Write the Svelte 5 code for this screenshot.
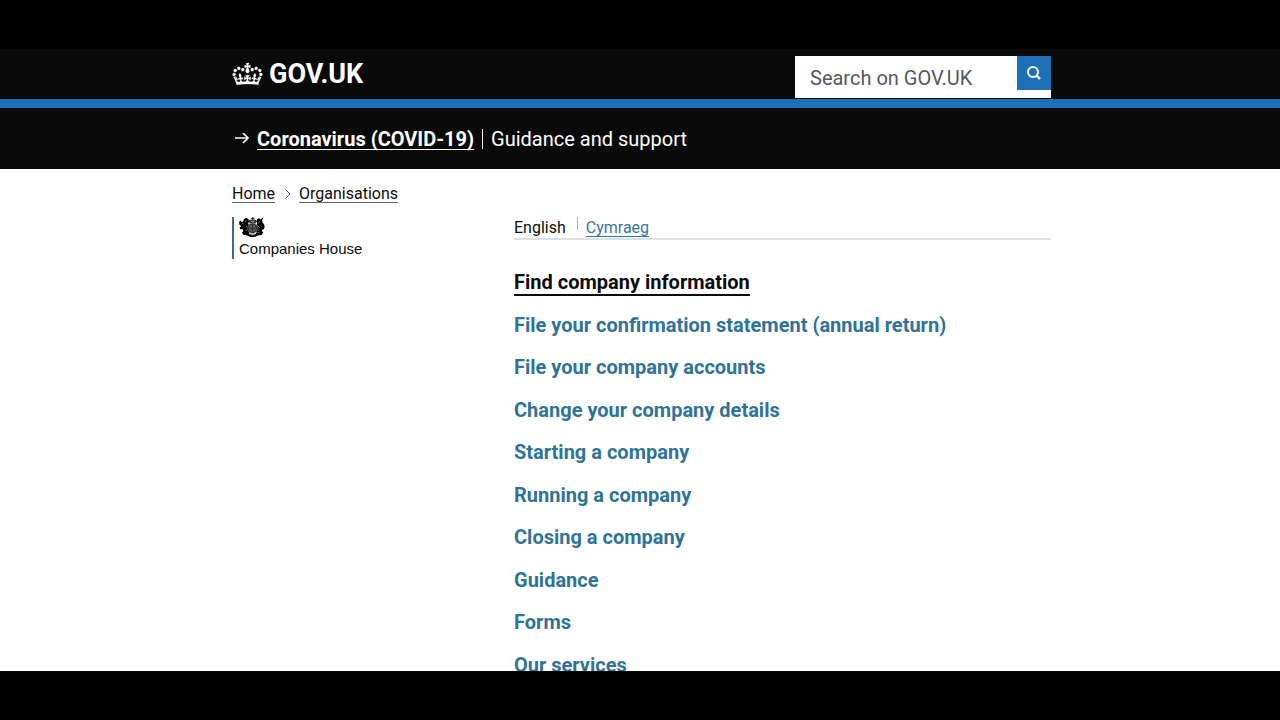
<script>
  const breadcrumbs = ['Home', 'Organisations'];

  const featuredLinks = [
    'Find company information',
    'File your confirmation statement (annual return)',
    'File your company accounts',
    'Change your company details',
    'Starting a company',
    'Running a company',
    'Closing a company',
    'Guidance',
    'Forms',
    'Our services'
  ];

  let focused = $state('Find company information');
  let query = $state('');
</script>

<div class="screen">
  <div class="viewport">
    <header class="header">
      <div class="container header-row">
        <a class="logo" href="#home">
          <svg class="crown" viewBox="0 0 132 97" aria-hidden="true">
            <path fill="currentColor" stroke="currentColor" d="M25 30.2c3.5 1.5 7.7-.2 9.1-3.7 1.5-3.6-.2-7.8-3.9-9.2-3.6-1.4-7.6.3-9.1 3.9-1.4 3.5.3 7.5 3.9 9zM9 39.5c3.6 1.5 7.8-.2 9.2-3.7 1.5-3.6-.2-7.8-3.9-9.1-3.6-1.5-7.6.2-9.1 3.8-1.4 3.5.3 7.5 3.8 9zM4.4 57.2c3.5 1.5 7.7-.2 9.1-3.8 1.5-3.6-.2-7.7-3.9-9.1-3.5-1.5-7.6.3-9.1 3.8-1.4 3.5.3 7.6 3.9 9.1zm38.3-21.4c3.5 1.5 7.7-.2 9.1-3.8 1.5-3.6-.2-7.7-3.9-9.1-3.6-1.5-7.6.3-9.1 3.8-1.3 3.6.4 7.7 3.9 9.1zm64.4-5.6c-3.6 1.5-7.8-.2-9.1-3.7-1.5-3.6.2-7.8 3.8-9.2 3.6-1.4 7.7.3 9.2 3.9 1.3 3.5-.4 7.5-3.9 9zm15.9 9.3c-3.6 1.5-7.7-.2-9.1-3.7-1.5-3.6.2-7.8 3.7-9.1 3.6-1.5 7.7.2 9.2 3.8 1.5 3.5-.3 7.5-3.8 9zm4.7 17.7c-3.6 1.5-7.8-.2-9.2-3.8-1.5-3.6.2-7.7 3.9-9.1 3.6-1.5 7.7.3 9.2 3.8 1.3 3.5-.4 7.6-3.9 9.1zM89.3 35.8c-3.6 1.5-7.8-.2-9.2-3.8-1.4-3.6.2-7.7 3.9-9.1 3.6-1.5 7.7.3 9.2 3.8 1.4 3.6-.3 7.7-3.9 9.1zM69.7 17.7l8.9 4.7V9.3l-8.9 2.8c-.2-.3-.5-.6-.9-.9L72.4 0H59.6l3.5 11.2c-.3.3-.6.5-.9.9l-8.8-2.8v13.1l8.8-4.7c.3.3.6.7.9.9l-5 15.4v.1c-.2.8-.4 1.6-.4 2.4 0 4.1 3.1 7.5 7 8.1h.2c.3 0 .7.1 1 .1.4 0 .7 0 1-.1h.2c4-.6 7.1-4.1 7.1-8.1 0-.8-.1-1.7-.4-2.4V34l-5.1-15.4c.4-.2.7-.6 1-.9zM66 92.8c16.9 0 32.8 1.1 47.1 3.2 4-16.9 8.9-26.7 14-33.5l-9.6-3.4c1 4.9 1.1 7.2 0 10.2-1.5-1.4-3-4.3-4.2-8.7L108.6 76c2.8-2 5-3.2 7.5-3.3-4.4 9.4-10 11.9-13.6 11.2-4.3-.8-6.3-4.6-5.6-7.9 1-4.7 5.7-5.9 8-.5 4.3-8.7-3-11.4-7.6-8.8 7.1-7.2 7.9-13.5 2.1-21.1-8 6.1-8.1 12.3-4.5 20.8-4.7-5.4-12.1-2.5-9.5 6.2 3.4-5.2 7.9-2 7.2 3.1-.6 4.3-6.4 7.8-13.5 7.2-10.3-.9-10.9-8-11.2-13.8 2.5-.5 7.1 1.8 11 7.3L80.2 60c-4.1 4.4-8 5.3-12.3 5.4 1.4-4.4 8-11.6 8-11.6H55.5s6.4 7.2 7.9 11.6c-4.2-.1-8-1-12.3-5.4l1.4 16.4c3.9-5.5 8.5-7.7 10.9-7.3-.3 5.8-.9 12.8-11.1 13.8-7.2.6-12.9-2.9-13.5-7.2-.7-5 3.8-8.3 7.1-3.1 2.7-8.7-4.6-11.6-9.4-6.2 3.7-8.5 3.6-14.7-4.6-20.8-5.8 7.6-5 13.9 2.2 21.1-4.7-2.6-11.9.1-7.7 8.8 2.3-5.5 7.1-4.2 8.1.5.7 3.3-1.3 7.1-5.7 7.9-3.5.7-9-1.8-13.5-11.2 2.5.1 4.7 1.3 7.5 3.3l-4.7-15.4c-1.2 4.4-2.7 7.2-4.3 8.7-1.1-3-.9-5.3 0-10.2l-9.5 3.4c5 6.9 9.9 16.7 14 33.5 14.8-2.1 30.8-3.2 47.7-3.2z" />
          </svg>
          <span>GOV.UK</span>
        </a>
        <form class="search" role="search" onsubmit={(e) => e.preventDefault()}>
          <input type="search" aria-label="Search on GOV.UK" placeholder="Search on GOV.UK" bind:value={query} />
          <button type="submit" aria-label="Search">
            <svg viewBox="0 0 16 16" width="16" height="16" fill="none" stroke="currentColor" stroke-width="2" aria-hidden="true">
              <circle cx="7" cy="7" r="5" />
              <path d="M10.5 10.5 14 14" stroke-width="2.4" />
            </svg>
          </button>
        </form>
      </div>
    </header>

    <aside class="banner" aria-label="Coronavirus">
      <div class="container banner-row">
        <svg class="arrow" viewBox="0 0 14 12" width="14" height="12" fill="none" stroke="currentColor" stroke-width="1.6" aria-hidden="true">
          <path d="M0 5h12.5M8 0l5 5-5 5" />
        </svg>
        <a href="#coronavirus">Coronavirus (COVID-19)</a>
        <span class="banner-text">Guidance and support</span>
      </div>
    </aside>

    <div class="container">
      <nav aria-label="Breadcrumb">
        <ol class="breadcrumbs">
          {#each breadcrumbs as crumb, i}
            <li>
              {#if i > 0}
                <svg class="chevron" viewBox="0 0 6 10" width="6" height="10" fill="none" stroke="currentColor" aria-hidden="true">
                  <path d="M.5 .5 5 5 .5 9.5" />
                </svg>
              {/if}
              <a href="#{crumb.toLowerCase()}">{crumb}</a>
            </li>
          {/each}
        </ol>
      </nav>

      <main class="columns">
        <div>
          <div class="organisation">
            <svg class="crest" viewBox="0 0 54 46" aria-hidden="true">
              <!-- lion -->
              <path d="M7 5l5-3 6 3 1 6-2 4 3 5-2 5 2 8-1 4-5-1-5 2-6-2 3-4-2-5-4 2-3-4 4-4-4-3-1-7 4-3 2 4 4-2z" />
              <path d="M3 14l4 2M13 8l-3 4M15 20l-4 4M15 29l-3 3" fill="none" stroke="#bbb" stroke-width="1.6" />
              <!-- unicorn -->
              <path d="M46 6l6-6-3 9 2 5 3 4 1 6-4 6-3-2 1 5 3 3-5 2-5-3-6 1-1-5 2-6-2-5 3-5-2-4 2-6 4-2z" />
              <path d="M44 10l-4 4M39 20l4 4M39 29l3 3M50 20l-3 3" fill="none" stroke="#bbb" stroke-width="1.6" />
              <!-- crown above the garter -->
              <path d="M26 0h3v3h3v2h-3v2c6-2 9 1 7 5l-2 3H21l-2-3c-2-4 1-7 7-5V5h-3V3h3z" fill="#333" />
              <path d="M23 10h9" stroke="#ccc" stroke-width="1.5" />
              <ellipse cx="27" cy="26" rx="11" ry="12" fill="#222" stroke="#ccc" />
              <ellipse cx="27" cy="26" rx="7" ry="8" fill="#555" stroke="#888" />
              <path d="M27 18v16M20 26h14" stroke="#222" stroke-width="1.5" />
              <!-- motto scroll -->
              <path d="M3 34c6 3 11 0 15 3 5 5 13 5 18 0 4-3 9 0 15-3l-2 6c-5 3-9 1-13 4-5 3-13 3-18 0-4-3-8-1-13-4z" />
              <path d="M19 40c5 3 12 3 17 0" fill="none" stroke="#999" />
            </svg>
            <span>Companies House</span>
          </div>
        </div>

        <div>
          <ul class="languages">
            <li>English</li>
            <li><a href="#cymraeg" lang="cy">Cymraeg</a></li>
          </ul>
          <ul class="featured">
            {#each featuredLinks as link}
              <li>
                <a href="#services" class:focused={focused === link} onfocus={() => (focused = link)}>{link}</a>
              </li>
            {/each}
          </ul>
        </div>
      </main>
    </div>
  </div>
</div>

<style>
  :global(body) {
    margin: 0;
    background: #000;
  }

  .screen {
    box-sizing: border-box;
    height: 100vh;
    padding: 49px 0;
    background: #000;
    color: #0b0c0c;
    font-family: Roboto, 'Liberation Sans', sans-serif;
    font-size: 16px;
    line-height: 20px;
  }

  .viewport {
    height: 100%;
    overflow: hidden;
    background: #fff;
  }

  .container {
    max-width: 819px;
    margin: 0 auto;
    padding: 0 15px 0 18px;
  }

  ul,
  ol {
    list-style: none;
    margin: 0;
    padding: 0;
  }

  .header {
    background: #0a0a0a;
    border-bottom: 9px solid #1d70b8;
  }

  .header-row {
    display: flex;
    justify-content: space-between;
    align-items: flex-start;
    padding-top: 7px;
    padding-bottom: 1px;
  }

  .logo {
    display: flex;
    align-items: center;
    gap: 6px;
    height: 35px;
    color: #fff;
    font-size: 27px;
    font-weight: 700;
    text-decoration: none;
  }

  .crown {
    width: 31px;
    height: 22px;
    overflow: visible;
  }

  .search {
    display: flex;
    align-items: flex-start;
    width: 256px;
    height: 42px;
    background: #fff;
  }

  .search input {
    flex: 1;
    min-width: 0;
    height: 42px;
    box-sizing: border-box;
    padding: 2px 0 0 15px;
    border: 0;
    outline: 0;
    background: none;
    color: #0b0c0c;
    font: inherit;
    font-size: 20px;
  }

  .search input::placeholder {
    color: #505a5f;
    opacity: 1;
  }

  .search button {
    display: flex;
    align-items: center;
    justify-content: center;
    width: 34px;
    height: 34px;
    padding: 0;
    border: 0;
    background: #1d70b8;
    color: #fff;
    cursor: pointer;
  }

  .banner {
    background: #0a0a0a;
    color: #fff;
  }

  .banner-row {
    display: flex;
    align-items: center;
    height: 61px;
    font-size: 20px;
  }

  .arrow {
    margin: 0 8px 0 3px;
  }

  .banner a {
    color: #fff;
    font-weight: 700;
    text-decoration: underline 1px;
    text-decoration-skip-ink: none;
    text-underline-offset: 3px;
  }

  .banner-text {
    margin-left: 8px;
    padding-left: 8px;
    border-left: 1px solid #fff;
  }

  .breadcrumbs {
    display: flex;
    padding-top: 15px;
  }

  .breadcrumbs li {
    display: flex;
    align-items: center;
  }

  .breadcrumbs a {
    color: #0b0c0c;
    text-decoration: underline 1px #666;
    text-decoration-skip-ink: none;
    text-underline-offset: 3px;
  }

  .chevron {
    margin: 0 8px 0 10px;
    color: #505a5f;
  }

  .columns {
    display: grid;
    grid-template-columns: 282px 1fr;
    padding-top: 13px;
  }

  .organisation {
    display: flex;
    flex-direction: column;
    align-items: flex-start;
    height: 42px;
    padding-left: 5px;
    border-left: 2px solid #3d6a94;
    font-family: 'Liberation Sans', Arial, sans-serif;
    font-size: 15px;
  }

  .crest {
    width: 27px;
    height: 23px;
    margin-bottom: 2px;
  }

  .languages {
    display: flex;
    border-bottom: 2px solid #dee0e2;
  }

  .languages li {
    height: 21px;
    line-height: 21px;
  }

  .languages li + li {
    margin-left: 11px;
  }

  .languages li + li::before {
    content: '';
    display: inline-block;
    height: 13px;
    margin-right: 8px;
    border-left: 1px solid #b1b4b6;
    vertical-align: top;
  }

  .languages a {
    color: #347799;
    text-decoration: underline 1px;
    text-decoration-skip-ink: none;
    text-underline-offset: 3px;
  }

  .featured {
    display: flex;
    flex-direction: column;
    justify-content: space-between;
    min-height: 408px;
    padding-top: 30px;
    font-size: 20px;
    font-weight: 700;
    line-height: 25px;
  }

  .featured a {
    color: #307399;
    text-decoration: none;
    outline: 0;
  }

  .featured a.focused {
    color: #0b0c0c;
    box-shadow: 0 2px #0b0c0c;
  }
</style>
